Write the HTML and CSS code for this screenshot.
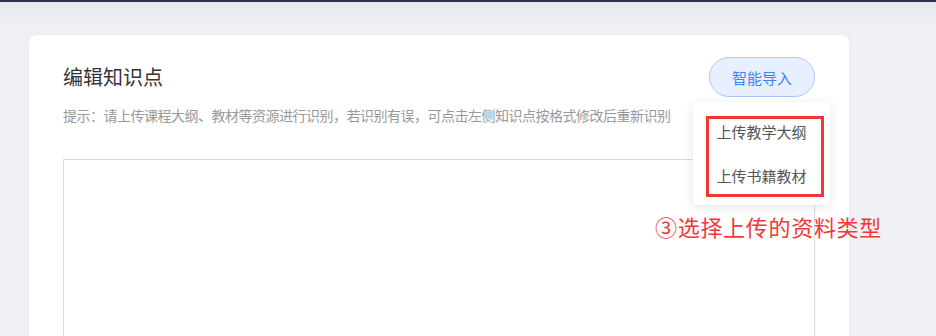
FILE: index.html
```html
<!DOCTYPE html>
<html>

<head>
    <title>编辑知识点</title>
    <link rel="stylesheet" href="styles.css">
</head>

<body>
    <div class="topbar"></div>
    <div class="main">
        <div class="card">
            <div class="card-header">
                <span class="title">编辑知识点</span>
                <div class="import-wrap">
                    <button class="import-btn">智能导入</button>
                    <div class="dropdown">
                        <div class="dropdown-item">上传教学大纲</div>
                        <div class="dropdown-item">上传书籍教材</div>
                        <div class="mark-box"></div>
                    </div>
                    <div class="mark-text">③选择上传的资料类型</div>
                </div>
            </div>
            <div class="hint">提示：请上传课程大纲、教材等资源进行识别，若识别有误，可点击左侧知识点按格式修改后重新识别</div>
            <div class="editor"></div>
        </div>
    </div>
</body>

</html>
```

FILE: styles.css
```css
html,
body {
    height: 100%;
}

body {
    margin: 0;
    overflow: hidden;
    font-family: "Microsoft YaHei", "Noto Sans CJK SC", sans-serif;
    background: linear-gradient(to bottom, #e6e7eb 0, #f0f1f5 28px, #f0f1f5 100%);
}

.topbar {
    height: 2px;
    background-color: #2d3451;
}

.main {
    padding: 33px 0 0 29px;
}

.card {
    width: 820px;
    height: 400px;
    box-sizing: border-box;
    padding: 22px 34px 0 34px;
    background: #ffffff;
    border-radius: 8px;
    box-shadow: 0 0 10px rgba(0, 0, 0, 0.03);
}

.card-header {
    display: flex;
    justify-content: space-between;
    align-items: center;
    height: 40px;
}

.title {
    font-size: 20px;
    color: #333;
    line-height: 40px;
}

.import-wrap {
    position: relative;
}

.import-btn {
    display: block;
    width: 106px;
    height: 40px;
    border: 1px solid #a9c8fb;
    border-radius: 20px;
    background-color: #e8f0ff;
    color: #3f84f4;
    font-family: inherit;
    font-size: 15px;
    cursor: pointer;
    outline: none;
}

.dropdown {
    position: absolute;
    top: 45px;
    right: -15px;
    width: 137px;
    padding: 8px 0 7px;
    box-sizing: border-box;
    background: #ffffff;
    border-radius: 6px;
    box-shadow: 0 2px 12px rgba(0, 0, 0, 0.1);
    z-index: 2;
}

.dropdown-item {
    height: 44px;
    line-height: 44px;
    text-align: center;
    font-size: 15px;
    color: #555;
}

.mark-box {
    position: absolute;
    left: 13px;
    top: 14px;
    width: 118px;
    height: 81px;
    box-sizing: border-box;
    border: 3px solid #f23535;
}

.mark-text {
    position: absolute;
    left: -54px;
    top: 155px;
    white-space: nowrap;
    font-size: 22px;
    letter-spacing: 0.7px;
    line-height: 28px;
    color: #f0383a;
    z-index: 2;
}

.hint {
    margin-top: 8px;
    font-size: 14px;
    letter-spacing: -0.5px;
    line-height: 20px;
    color: #999;
}

.editor {
    margin-top: 34px;
    height: 300px;
    border: 1px solid #dadada;
}
```
